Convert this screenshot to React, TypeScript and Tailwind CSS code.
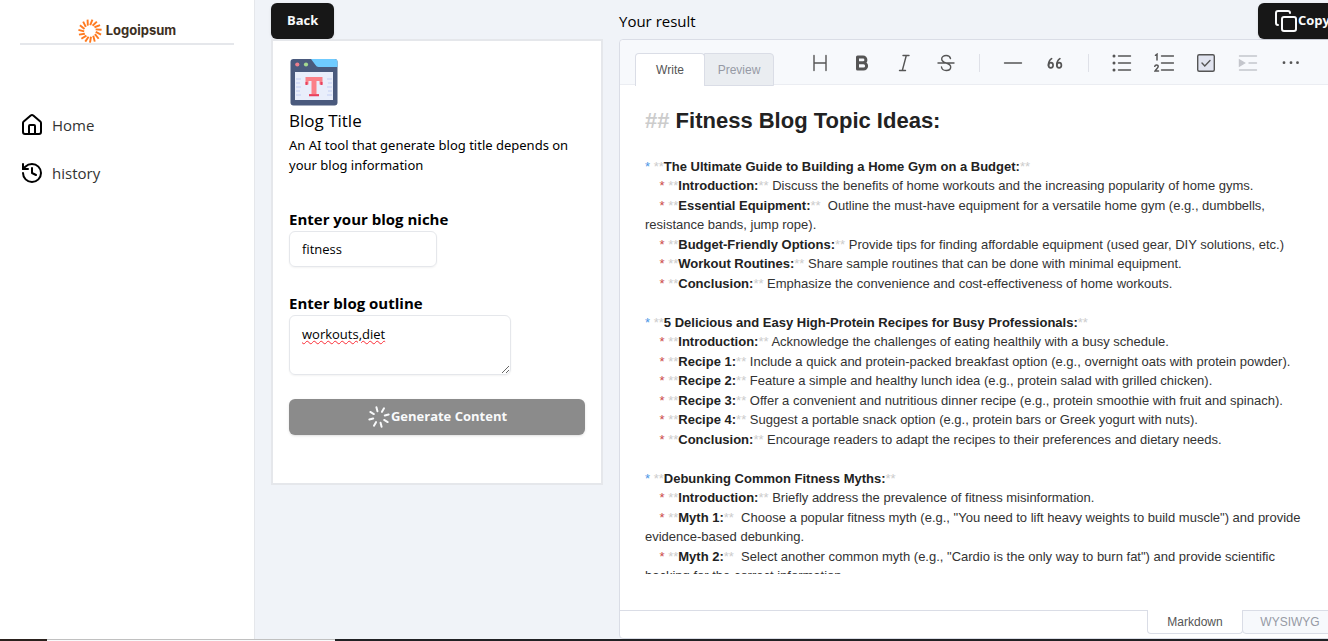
import type { ReactNode } from "react";
import { Copy, History, House, Loader } from "lucide-react";

type Line =
  | { kind: "topic"; title: string }
  | { kind: "item"; title: string; text: string }
  | { kind: "blank" };

const topic = (title: string): Line => ({ kind: "topic", title });
const item = (title: string, text: string): Line => ({ kind: "item", title, text });
const blank: Line = { kind: "blank" };

const LINES: Line[] = [
  blank,
  topic("The Ultimate Guide to Building a Home Gym on a Budget:"),
  item("Introduction:", " Discuss the benefits of home workouts and the increasing popularity of home gyms."),
  item("Essential Equipment:", "  Outline the must-have equipment for a versatile home gym (e.g., dumbbells, resistance bands, jump rope)."),
  item("Budget-Friendly Options:", " Provide tips for finding affordable equipment (used gear, DIY solutions, etc.)"),
  item("Workout Routines:", " Share sample routines that can be done with minimal equipment."),
  item("Conclusion:", " Emphasize the convenience and cost-effectiveness of home workouts."),
  blank,
  topic("5 Delicious and Easy High-Protein Recipes for Busy Professionals:"),
  item("Introduction:", " Acknowledge the challenges of eating healthily with a busy schedule."),
  item("Recipe 1:", " Include a quick and protein-packed breakfast option (e.g., overnight oats with protein powder)."),
  item("Recipe 2:", " Feature a simple and healthy lunch idea (e.g., protein salad with grilled chicken)."),
  item("Recipe 3:", " Offer a convenient and nutritious dinner recipe (e.g., protein smoothie with fruit and spinach)."),
  item("Recipe 4:", " Suggest a portable snack option (e.g., protein bars or Greek yogurt with nuts)."),
  item("Conclusion:", " Encourage readers to adapt the recipes to their preferences and dietary needs."),
  blank,
  topic("Debunking Common Fitness Myths:"),
  item("Introduction:", " Briefly address the prevalence of fitness misinformation."),
  item("Myth 1:", '  Choose a popular fitness myth (e.g., "You need to lift heavy weights to build muscle") and provide evidence-based debunking.'),
  item("Myth 2:", '  Select another common myth (e.g., "Cardio is the only way to burn fat") and provide scientific backing for the correct information.'),
];

function Logo() {
  const rays = Array.from({ length: 15 }, (_, i) => i * 24 + 8);
  return (
    <div className="flex h-6 items-center justify-center gap-1">
      <svg viewBox="-12 -12 24 24" className="size-6" aria-hidden="true">
        {rays.map((a) => (
          <path key={a} d="M-0.6 -5.8 L0.8 -11.6" transform={`rotate(${a})`} stroke="#ff7a1f" strokeWidth="1.9" />
        ))}
      </svg>
      <span className="font-['Inter',sans-serif] text-[13px] font-bold text-[#3d2f22]">Logoipsum</span>
    </div>
  );
}

function Sidebar() {
  return (
    <aside className="w-[255px] shrink-0 border-r border-gray-200 bg-white px-5 pt-[19px] shadow-sm">
      <Logo />
      <hr className="border-t-2 border-gray-200" />
      <nav className="mt-14 text-[15px] text-[#333]">
        <a href="#home" className="flex h-12 items-center gap-2">
          <House className="size-6 text-black" />
          Home
        </a>
        <a href="#history" className="flex h-12 items-center gap-2">
          <History className="size-6 text-black" />
          history
        </a>
      </nav>
    </aside>
  );
}

function BlogIcon() {
  return (
    <svg viewBox="0 0 50 50" className="size-[50px]" aria-hidden="true">
      <rect x="1.5" y="2" width="47" height="46.5" rx="3" fill="#4a5a7d" />
      <path d="M22 2h23.500a3 3 0 0 1 3 3v5H29.500q-2 0-3-2z" fill="#6fcbff" />
      <circle cx="8.300" cy="7.500" r="2.100" fill="#ee7f8d" />
      <circle cx="17" cy="7.500" r="2.100" fill="#a5d890" />
      <rect x="6" y="15" width="38" height="28" fill="#e9eefb" />
      <path d="M7 22h5M7 26h4M7 30h5M7 34h4M7 38h5M38 22h5M39 26h4M38 30h5M39 34h4M38 38h5" stroke="#c3cef3" strokeWidth="1" />
      <path d="M16.500 20h17v7.500h-3V24h-3v13h2.500v2H20v-2h2.500V24h-3v3.500h-3z" fill="#fb8088" />
      <path d="M16.500 25v3h2v-3zM31.500 25v3h2v-3zM20 37.300h10v2H20z" fill="#e8415e" />
    </svg>
  );
}

function ToolForm() {
  return (
    <div className="border-2 border-gray-200 bg-white p-4 pb-8">
      <BlogIcon />
      <h2 className="text-[17px] leading-7">Blog Title</h2>
      <p className="font-['Noto_Sans',sans-serif] text-[13px] leading-5">
        An AI tool that generate blog title depends on your blog information
      </p>
      <form className="mt-8 flex flex-col gap-6 pb-4" onSubmit={(e) => e.preventDefault()}>
        <div className="flex flex-col items-start">
          <label htmlFor="niche" className="text-[15px] leading-6 font-bold">Enter your blog niche</label>
          <input
            id="niche"
            defaultValue="fitness"
            className="h-9 w-[148px] rounded-md border border-gray-200 px-3 text-[13px] shadow-xs"
          />
        </div>
        <div className="flex flex-col items-start">
          <label htmlFor="outline" className="text-[15px] leading-6 font-bold">Enter blog outline</label>
          <textarea
            id="outline"
            defaultValue="workouts,diet"
            spellCheck={false}
            className="h-[60px] w-[222px] rounded-md border border-gray-200 px-3 py-2 text-[13px] leading-5 underline decoration-red-500 decoration-wavy decoration-1 shadow-xs"
          />
        </div>
        <button
          type="submit"
          className="flex h-9 items-center justify-center rounded-md bg-[#8b8b8b] text-[13px] font-bold text-gray-50 shadow-sm"
        >
          <Loader className="size-6 rotate-[-15deg]" />
          Generate Content
        </button>
      </form>
    </div>
  );
}

function Tool({ label, children }: { label: string; children: ReactNode }) {
  return (
    <button type="button" aria-label={label} className="mx-[5px] flex size-8 shrink-0 items-center justify-center">
      <svg viewBox="0 0 20 20" className="size-5" fill="none" stroke="#555" strokeWidth="1.4" strokeLinecap="round">
        {children}
      </svg>
    </button>
  );
}

function Divider() {
  return <span className="mx-3 h-[18px] w-px shrink-0 bg-[#dfe1e8]" />;
}

function Toolbar() {
  return (
    <div className="flex h-[45px] rounded-tl border-b border-[#ebedf2] bg-[#f7f9fc] pl-[15px]">
      <div className="mt-[13px] flex h-[33px] shrink-0 text-xs">
        <button type="button" className="w-[70px] rounded-t border border-b-0 border-[#dadde6] bg-white text-[#555]">
          Write
        </button>
        <button type="button" className="-ml-px w-[70px] rounded-tr border border-[#dadde6] bg-[#eaedf1] text-[#969aa5]">
          Preview
        </button>
      </div>
      <div className="ml-[25px] flex h-[46px] items-center">
        <Tool label="Heading"><path d="M4 2.500v15M16 2.500v15M4 10h12" /></Tool>
        <Tool label="Bold">
          <path d="M5.500 4h5.500a2.900 2.900 0 0 1 0 5.800H5.500zM5.500 9.800h6a3.100 3.100 0 0 1 0 6.200h-6z" strokeWidth="3" strokeLinejoin="round" />
        </Tool>
        <Tool label="Italic"><path d="M9 2.500h6M5.500 17.500h6M12.300 2.500 8.300 17.500" /></Tool>
        <Tool label="Strike">
          <path d="M14.500 5.500C14 3.500 12.300 2.500 10.200 2.500 7.500 2.500 5.700 4 5.700 6c0 2.200 2 3.200 4.500 4s4.500 1.800 4.500 4c0 2-1.900 3.500-4.500 3.500-2.500 0-4.400-1.300-4.700-3.500M2 10h16" />
        </Tool>
        <Divider />
        <Tool label="Line"><path d="M1.500 10h17" /></Tool>
        <Tool label="Blockquote">
          <path d="M6.600 5.600C4.600 6.900 3.500 9.300 3.500 12.200M14.900 5.600c-2 1.300-3.100 3.700-3.100 6.600" strokeWidth="1.700" />
          <ellipse cx="5.800" cy="12.200" rx="2.300" ry="2.600" strokeWidth="1.700" />
          <ellipse cx="14.100" cy="12.200" rx="2.300" ry="2.600" strokeWidth="1.700" />
        </Tool>
        <Divider />
        <Tool label="Unordered list">
          <path d="M6.500 3h12M6.500 10h12M6.500 17h12" />
          <path d="M2 3h.01M2 10h.01M2 17h.01" strokeWidth="3" />
        </Tool>
        <Tool label="Ordered list">
          <path d="M7.500 3h12M7.500 10h12M7.500 17h12" />
          <path d="M1.500 2.300 3 1.200V7M.8 13.300c.3-1.700 3.500-1.700 3.400.2C4.200 15 2 16.200 1 18h3.500" strokeWidth="1.500" />
        </Tool>
        <Tool label="Task">
          <rect x="1.700" y="1.700" width="16.600" height="16.600" rx="1.500" fill="#e1e4f0" />
          <path d="m6 10 2.800 3 5.200-5.500" />
        </Tool>
        <Tool label="Indent">
          <g stroke="#c4c6cc">
            <path d="M1.500 3h17M11 10h7.500M1.500 17h17" />
            <path d="M1.500 7v6L6.500 10z" fill="#c4c6cc" />
          </g>
        </Tool>
        <Tool label="More"><path d="M4 9.700h.01M11 9.700h.01M17.500 9.700h.01" strokeWidth="2.800" /></Tool>
      </div>
    </div>
  );
}

function Mark() {
  return <span className="text-[#ccc]">**</span>;
}

function Title({ children }: { children: ReactNode }) {
  return <strong className="text-[#222]">{children}</strong>;
}

function MarkdownLine({ line }: { line: Line }) {
  if (line.kind === "blank") return <div><br /></div>;
  if (line.kind === "topic")
    return (
      <div>
        <span className="text-[#4b96e6]">*</span> <Mark /><Title>{line.title}</Title><Mark />
      </div>
    );
  return (
    <div>
      {"    "}<span className="text-[#cb4848]">*</span> <Mark /><Title>{line.title}</Title><Mark />{line.text}
    </div>
  );
}

function Editor() {
  return (
    <div className="flex h-[600px] flex-col rounded border border-[#dadde6] bg-white font-['Liberation_Sans',Arial,sans-serif]">
      <Toolbar />
      <div className="flex min-h-0 flex-1 flex-col px-[25px] pt-[19px] pb-9">
        <div
          role="textbox"
          aria-multiline="true"
          aria-label="Markdown"
          contentEditable
          suppressContentEditableWarning
          spellCheck={false}
          className="min-h-0 flex-1 overflow-hidden text-[13px] leading-[1.5] whitespace-pre-wrap text-[#333] outline-none"
        >
          <div className="text-[22px] font-bold text-[#222]"><span className="text-[#ccc]">##</span> Fitness Blog Topic Ideas:</div>
          {LINES.map((line, i) => (
            <MarkdownLine key={i} line={line} />
          ))}
        </div>
      </div>
      <div className="flex h-7 shrink-0 text-xs">
        <div className="flex-1 border-t border-[#dadde6]" />
        <button type="button" className="h-6 w-24 rounded-b border border-t-0 border-[#dadde6] text-[#555]">
          Markdown
        </button>
        <button type="button" className="-ml-px h-6 w-24 rounded-b border border-[#dadde6] bg-[#f7f9fc] text-[#969aa5]">
          WYSIWYG
        </button>
        <div className="w-[7px] border-t border-[#dadde6]" />
      </div>
    </div>
  );
}

export default function App() {
  return (
    <div className="flex h-screen flex-col overflow-hidden bg-slate-100 font-['Open_Sans',sans-serif] text-black">
      <div className="flex min-h-0 flex-1">
        <Sidebar />
        <main className="grid min-w-0 flex-1 grid-cols-[332px_minmax(727px,1fr)] content-start items-start gap-4 bg-[#f0f3f8] pt-[3px] pl-4">
          <section>
            <button type="button" className="flex h-9 items-center rounded-md bg-neutral-900 px-4 text-[13px] font-bold text-gray-50 shadow-sm">
              Back
            </button>
            <ToolForm />
          </section>
          <section>
            <div className="flex h-9 items-center justify-between">
              <h2 className="text-[15px]">Your result</h2>
              <button type="button" className="flex h-9 items-center rounded-md bg-neutral-900 px-4 text-[13px] font-bold text-gray-50 shadow-sm">
                <Copy className="size-6" />
                Copy
              </button>
            </div>
            <Editor />
          </section>
        </main>
      </div>
      <footer className="flex h-0.5 shrink-0 bg-[#202124]">
        <div className="w-[47px] bg-[#2a211d]" />
        <div className="w-72 border-t border-[#c0c0c0] bg-gray-50" />
      </footer>
    </div>
  );
}
